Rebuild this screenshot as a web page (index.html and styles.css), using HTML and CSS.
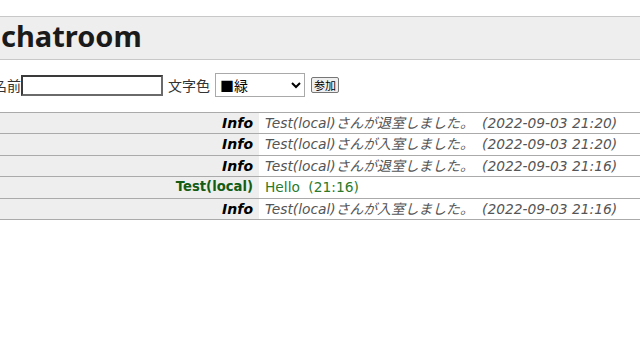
FILE: index.html
```html
<!DOCTYPE html>
<html lang="ja">
<head>
  <meta charset="UTF-8">
  <meta name="viewport" content="width=device-width, initial-scale=1.0">
  <title>chatroom</title>
  <link rel="stylesheet" href="styles.css">
</head>
<body>
  <div class="page">
    <div class="header">
      <h1>chatroom</h1>
    </div>

    <form class="join-form" onsubmit="return false;">
      <label for="nameInput">名前</label><input type="text" id="nameInput">
      <label for="colorSelect">文字色</label>
      <select id="colorSelect">
        <option>■緑</option>
        <option>■赤</option>
        <option>■青</option>
        <option>■黒</option>
      </select>
      <button type="submit" class="join-btn">参加</button>
    </form>

    <table class="log">
      <tr class="info">
        <td class="who">Info</td>
        <td class="msg">Test(local)さんが退室しました。 <span class="time">(2022-09-03 21:20)</span></td>
      </tr>
      <tr class="info">
        <td class="who">Info</td>
        <td class="msg">Test(local)さんが入室しました。 <span class="time">(2022-09-03 21:20)</span></td>
      </tr>
      <tr class="info">
        <td class="who">Info</td>
        <td class="msg">Test(local)さんが退室しました。 <span class="time">(2022-09-03 21:16)</span></td>
      </tr>
      <tr class="chat green">
        <td class="who">Test(local)</td>
        <td class="msg">Hello <span class="time">(21:16)</span></td>
      </tr>
      <tr class="info">
        <td class="who">Info</td>
        <td class="msg">Test(local)さんが入室しました。 <span class="time">(2022-09-03 21:16)</span></td>
      </tr>
    </table>
  </div>
</body>
</html>
```

FILE: styles.css
```css
body {
  margin: 0;
  font-family: "DejaVu Sans", "Noto Sans CJK JP", sans-serif;
  font-size: 14px;
  color: #000;
  background: #fff;
  overflow: hidden;
}

.page {
  margin-left: -7px;
}

.header {
  margin-top: 16px;
  background-color: #eeeeee;
  border-top: 1px solid #c8c8c8;
  border-bottom: 1px solid #c8c8c8;
}

.header h1 {
  margin: 0;
  padding: 0 0 5px 8px;
  font-family: "Noto Sans", "DejaVu Sans", sans-serif;
  font-size: 29px;
  font-weight: bold;
  line-height: 37px;
  color: #1a1a1a;
}

.join-form {
  display: flex;
  align-items: center;
  margin: 13px 0 0 0;
  height: 24px;
}

.join-form label {
  color: #333;
  font-size: 14px;
}

#nameInput {
  width: 134px;
  height: 17px;
  margin: 0 5px 0 0;
  padding: 0 2px;
  border: 2px solid #4a4a4a;
  border-color: #3a3a3a #6a6a6a #6a6a6a #3a3a3a;
  font-size: 13px;
}

#colorSelect {
  width: 90px;
  height: 24px;
  margin: 0 0 0 5px;
  border: 1px solid #a9a9a9;
  border-radius: 0;
  background: #fff;
  font-family: "Noto Sans CJK JP", sans-serif;
  font-size: 14px;
  color: #000;
}

.join-btn {
  margin-left: 6px;
  height: 16px;
  padding: 0 2px;
  border: 1px solid #767676;
  border-radius: 2px;
  background-color: #efefef;
  font-family: "Noto Sans CJK JP", sans-serif;
  font-size: 11px;
  line-height: 13px;
  color: #000;
}

.log {
  width: calc(100% + 7px);
  margin-top: 15px;
  border-collapse: collapse;
}

.log td {
  line-height: 20.4px;
  padding: 0;
  border-top: 1px solid #aaaaaa;
  border-bottom: 1px solid #aaaaaa;
  white-space: nowrap;
}

.log .who {
  width: 260px;
  padding-right: 6px;
  text-align: right;
  background-color: #eeeeee;
  font-weight: bold;
  font-style: italic;
}

.log .msg {
  padding-left: 6px;
  background-color: #fff;
  color: #555;
  font-size: 13.8px;
  font-style: italic;
}

.log .time {
  margin-left: 4px;
}

.log .green .who {
  font-size: 13.2px;
  font-style: normal;
  color: #145c14;
}

.log .green .msg {
  font-style: normal;
  color: #2b7a2b;
}
```
